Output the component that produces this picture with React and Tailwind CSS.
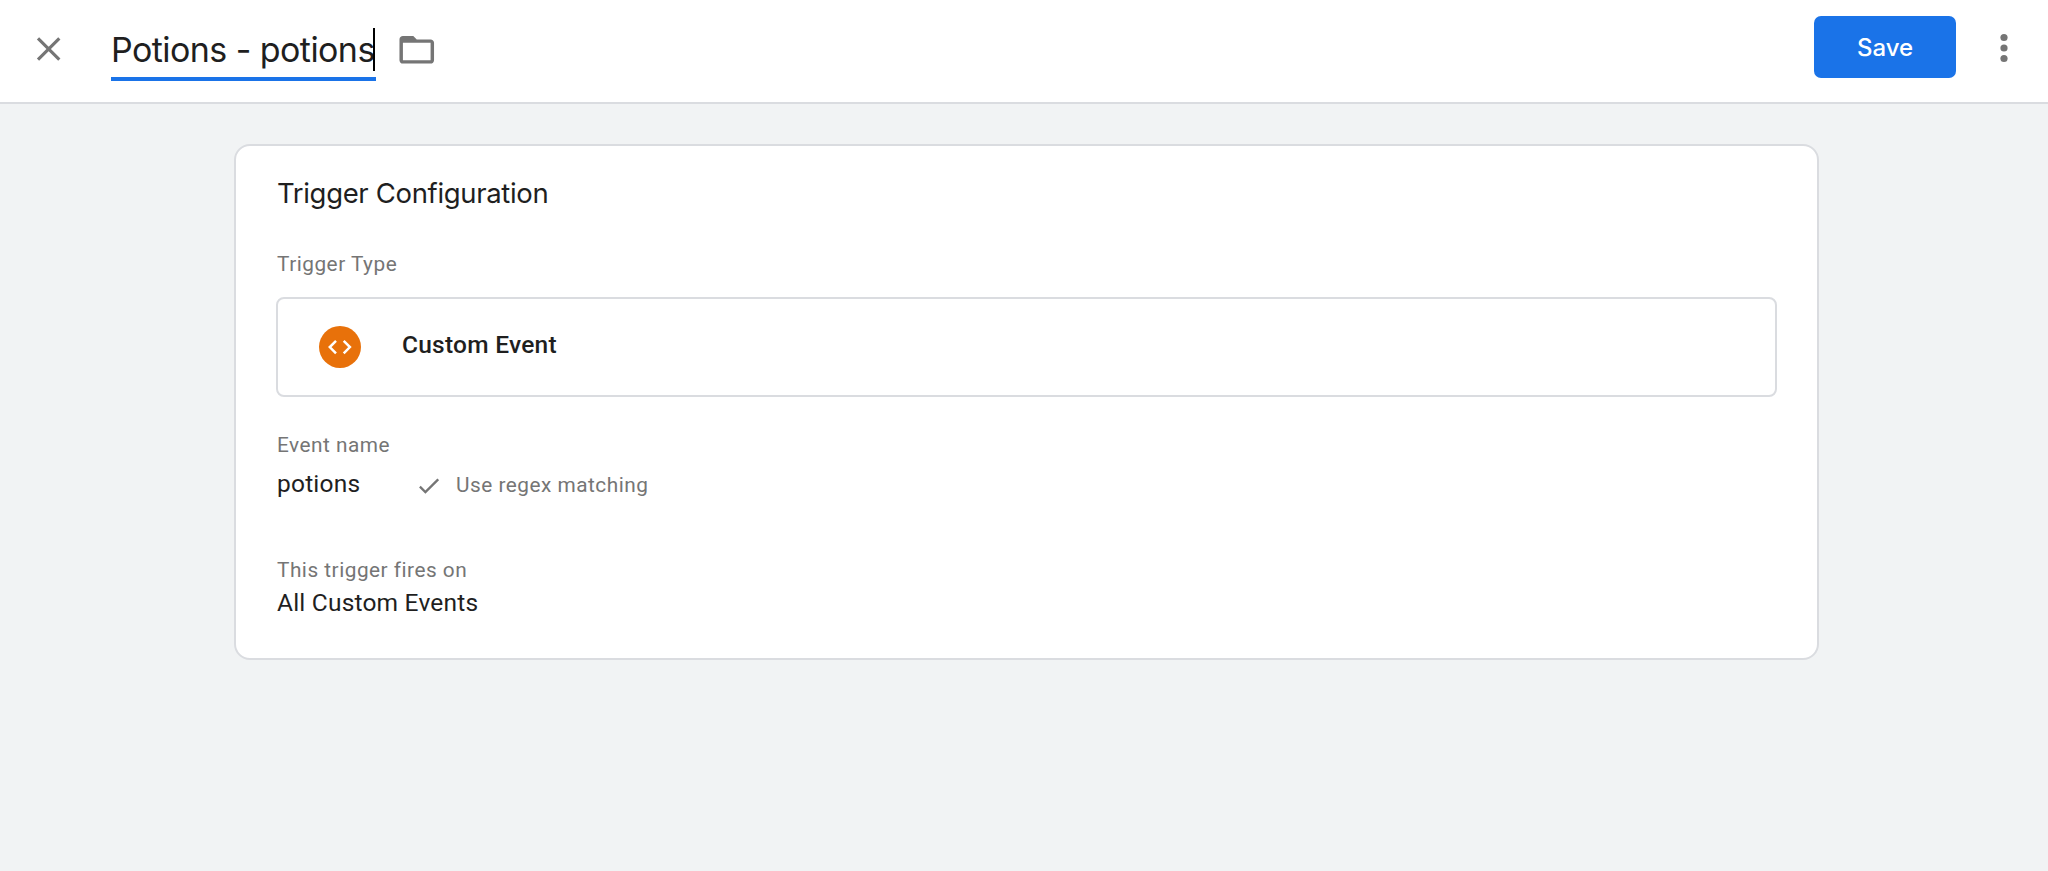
import React, { useState } from 'react';

const CloseIcon = () => (
  <svg viewBox="0 0 24 24" className="size-10 shrink-0" fill="none" stroke="#757575" strokeWidth="1.9">
    <path d="M5.4 5.6l12.8 12.8M18.2 5.6L5.4 18.4" />
  </svg>
)

const FolderIcon = () => (
  <svg viewBox="0 0 24 24" className="size-[41.5px] shrink-0" fill="#757575">
    <path d="M20 6h-8l-2-2H4c-1.1 0-1.99.9-1.99 2L2 18c0 1.1.9 2 2 2h16c1.1 0 2-.9 2-2V8c0-1.1-.9-2-2-2zm0 12H4V8h16v10z" />
  </svg>
)

const MoreIcon = () => (
  <svg viewBox="0 0 8 30" className="h-[30px] w-2" fill="#757575">
    <circle cx="4" cy="4.5" r="3.6" />
    <circle cx="4" cy="15" r="3.6" />
    <circle cx="4" cy="25.5" r="3.6" />
  </svg>
)

const CodeIcon = () => (
  <svg viewBox="0 0 42 42" className="size-[42px] shrink-0">
    <circle cx="21" cy="21" r="21" fill="#e8710a" />
    <path d="M17 14.9l-6.2 6.2 6.2 6.2M24.7 14.9l6.2 6.2-6.2 6.2" fill="none" stroke="#fff" strokeWidth="2.5" />
  </svg>
)

const CheckIcon = () => (
  <svg viewBox="0 0 20 16" className="mt-[3px] h-4 w-5 shrink-0" fill="none" stroke="#757575" strokeWidth="2.3">
    <path d="M.9 8.6l5.5 5.5L19.2 1.3" />
  </svg>
)

const Header = () => {
  const [name, setName] = useState("Potions - potions")

  return (
    <header className="flex h-[104px] items-start border-b-2 border-[#dadce0] bg-white pl-[29px] pr-[39px]">
      <button className="mt-[29px] cursor-pointer">
        <CloseIcon />
      </button>
      <div className="relative ml-[42px] mt-[25px] h-14 w-[265px] border-b-4 border-[#1a73e8]">
        <input
          type="text"
          value={name}
          onChange={(e) => setName(e.target.value)}
          className="block h-[50px] w-full font-['Inter',sans-serif] text-[34px] leading-[50px] tracking-[-0.57px] text-[#1f1f1f] outline-none"
        />
        {/* text cursor */}
        <span className="absolute right-px top-[3px] h-[43px] w-0.5 bg-black" />
      </div>
      <button className="ml-5 mt-[29px] cursor-pointer">
        <FolderIcon />
      </button>

      <button className="ml-auto mt-4 h-[62px] w-[142px] cursor-pointer rounded-[7px] bg-[#1a73e8] pt-0.5 font-['Inter',sans-serif] text-2xl font-medium text-white">
        Save
      </button>
      <button className="ml-[44px] mr-px mt-[33px] cursor-pointer">
        <MoreIcon />
      </button>
    </header>
  )
}

const Label = ({ children, className }) => (
  <p className={`text-[20.8px] leading-6 tracking-[0.5px] text-[#757575] ${className}`}>{children}</p>
)

const TriggerCard = () => (
  <section className="ml-[234px] mt-10 h-[516px] w-[1585px] rounded-2xl border-2 border-[#dadce0] bg-white px-10 pt-[29px]">
    <h2 className="ml-px font-['Inter',sans-serif] text-[27.5px] leading-9 tracking-[-0.34px] text-[#1f1f1f]">
      Trigger Configuration
    </h2>

    <Label className="ml-px mt-[41px]">Trigger Type</Label>
    <div className="mt-[21px] flex h-[100px] items-center rounded-lg border-2 border-[#dadce0] pl-[41px]">
      <CodeIcon />
      <span className="-mt-1 ml-[41px] text-[24.5px] font-medium leading-8 tracking-[0.25px] text-[#1f1f1f]">
        Custom Event
      </span>
    </div>

    <Label className="ml-px mt-9">Event name</Label>
    <div className="ml-px mt-[11px] flex h-8 items-center">
      <span className="w-[142px] text-[24.5px] leading-8 tracking-[0.2px] text-[#1f1f1f]">potions</span>
      <CheckIcon />
      <Label className="ml-[17px] mt-0.5">Use regex matching</Label>
    </div>

    <Label className="ml-px mt-[58px]">This trigger fires on</Label>
    <p className="ml-px mt-[5px] text-[24.5px] leading-8 tracking-[0.2px] text-[#1f1f1f]">All Custom Events</p>
  </section>
)

const App = () => {
  return (
    <div className="h-[871px] w-[2048px] overflow-hidden bg-[#f1f3f4] font-['Roboto',sans-serif]">
      <Header />
      <TriggerCard />
    </div>
  )
};

export default App;
